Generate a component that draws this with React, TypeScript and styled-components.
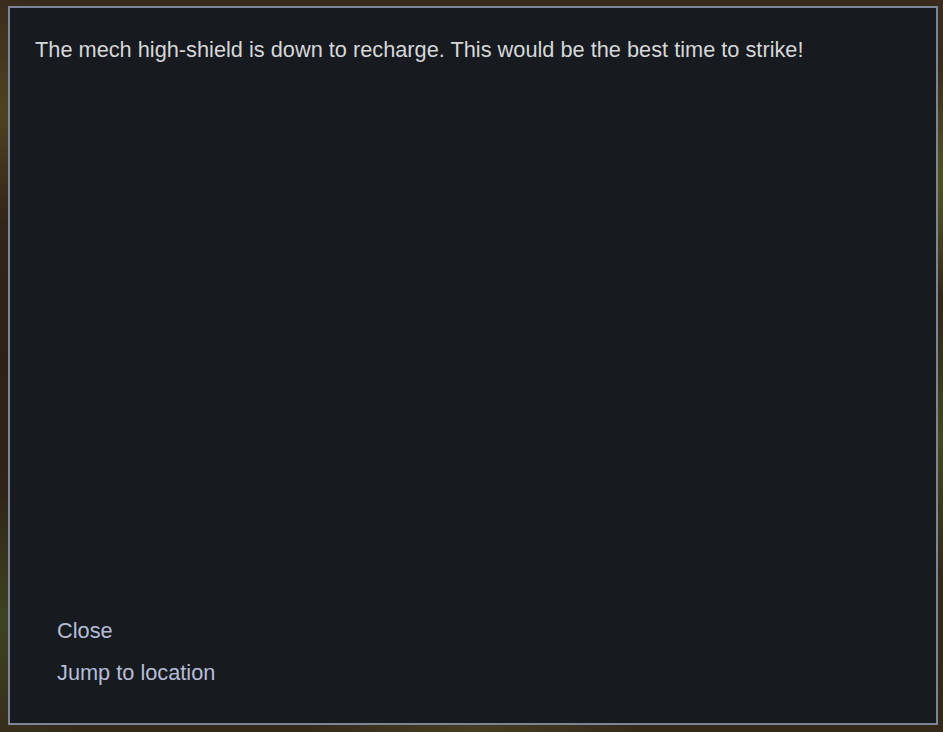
import React from 'react';
import styled, { createGlobalStyle } from 'styled-components';

const GlobalStyle = createGlobalStyle`
  html, body {
    margin: 0;
    padding: 0;
    height: 100%;
  }
  body {
    font-family: "Liberation Sans", Arial, sans-serif;
    background: #2a2118;
  }
  #root {
    height: 100%;
  }
`;

const Scene = styled.div`
  width: 943px;
  height: 732px;
  box-sizing: border-box;
  padding: 6px 5px 7px 8px;
  background:
    radial-gradient(circle at 96% 25%, rgba(120, 140, 40, 0.55), transparent 12%),
    radial-gradient(circle at 99% 60%, rgba(90, 110, 30, 0.5), transparent 14%),
    radial-gradient(circle at 0% 15%, rgba(110, 100, 40, 0.45), transparent 10%),
    radial-gradient(circle at 0% 85%, rgba(80, 100, 40, 0.45), transparent 12%),
    radial-gradient(circle at 50% 100%, rgba(90, 80, 40, 0.5), transparent 20%),
    linear-gradient(180deg, #3a2a1c 0%, #2b2117 50%, #33291a 100%);
`;

const Dialog = styled.div`
  height: 100%;
  box-sizing: border-box;
  border: 2px solid #7b8595;
  background: #171a1f;
  display: flex;
  flex-direction: column;
  justify-content: space-between;
  padding: 28px 25px 36px 25px;
`;

const Message = styled.p`
  margin: 0;
  color: #d6d7d9;
  font-size: 21.75px;
  line-height: 28px;
`;

const Actions = styled.div`
  display: flex;
  flex-direction: column;
  align-items: flex-start;
  gap: 14px;
  padding-left: 22px;
`;

const ActionLink = styled.button`
  background: none;
  border: none;
  padding: 0;
  margin: 0;
  font-family: inherit;
  font-size: 21.75px;
  line-height: 28px;
  color: #b6bdd8;
  cursor: pointer;
`;

export default function App() {
  return (
    <>
      <GlobalStyle />
      <Scene>
        <Dialog>
          <Message>
            The mech high-shield is down to recharge. This would be the best time to strike!
          </Message>
          <Actions>
            <ActionLink>Close</ActionLink>
            <ActionLink>Jump to location</ActionLink>
          </Actions>
        </Dialog>
      </Scene>
    </>
  );
}
